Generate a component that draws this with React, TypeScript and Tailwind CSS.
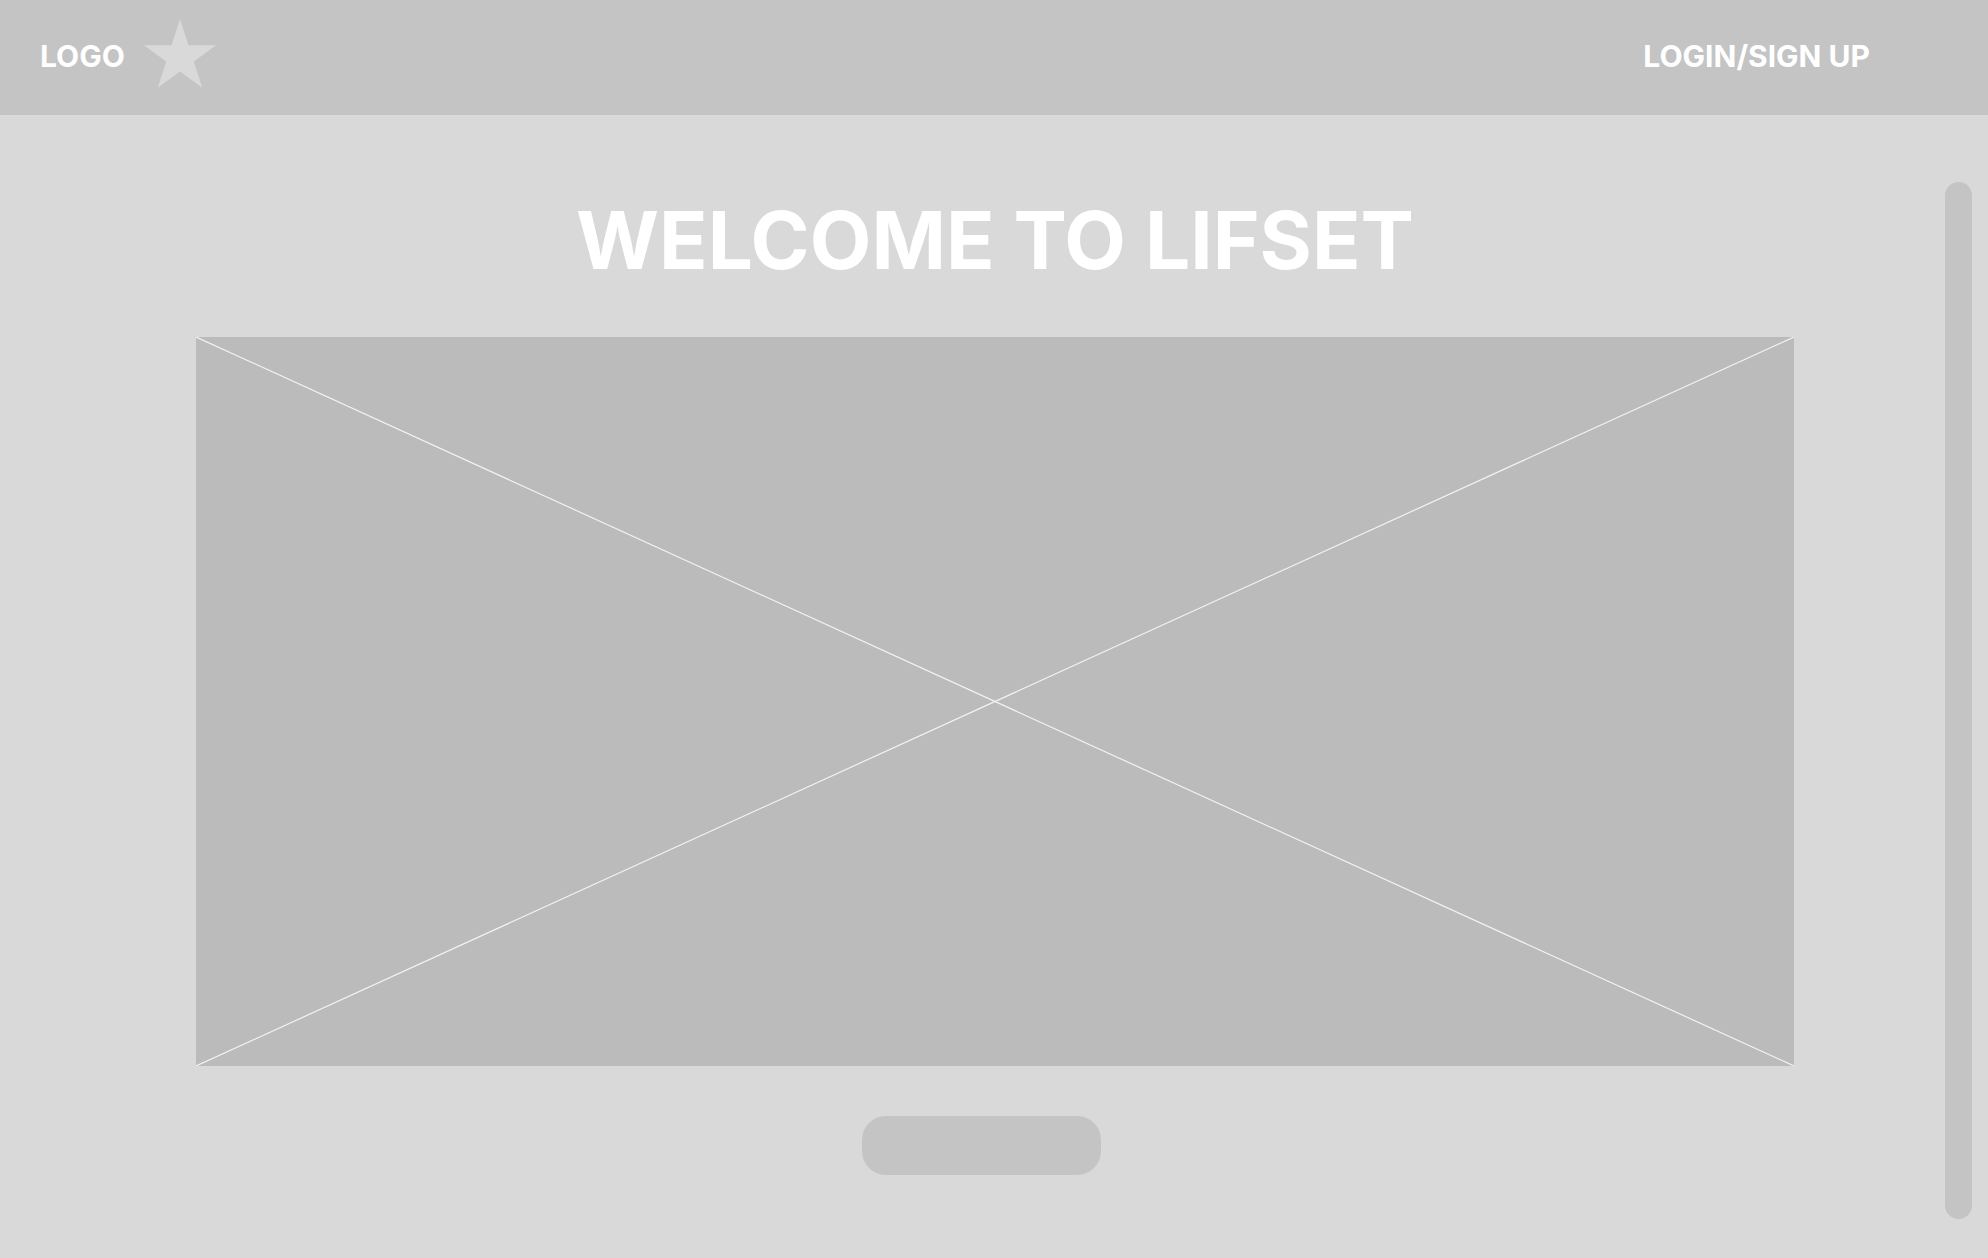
export default function App() {
  return (
    <div
      className="flex h-screen w-full flex-col overflow-hidden bg-[#d9d9d9]"
      style={{ fontFamily: 'Inter, "Noto Sans", sans-serif' }}
    >
      <header className="flex h-[115px] shrink-0 items-start justify-between bg-[#c4c4c4]">
        <div className="flex items-start">
          <div className="pl-[40px] pt-[41px] text-[30px] font-bold leading-none text-white">LOGO</div>
          <svg className="ml-[17px] mt-[19px]" width="76" height="70" viewBox="0 0 76 70">
            <polygon
              fill="#d9d9d9"
              points="38,0 46.5,26.3 74.1,26.3 51.8,42.5 60.3,68.7 38,52.5 15.7,68.7 24.2,42.5 1.9,26.3 29.5,26.3"
            />
          </svg>
        </div>
        <div className="pr-[118px] pt-[41px] text-[30px] font-bold leading-none text-white">LOGIN/SIGN UP</div>
      </header>
      <main className="flex flex-1">
        <div className="flex flex-1 flex-col items-center pl-[45px] pt-[85px]">
          <h1 className="text-[80px] font-bold leading-none text-white">WELCOME TO LIFSET</h1>
          <div className="mt-[57px] h-[729px] w-[1598px] bg-[#bbbbbb]">
            <svg className="h-full w-full" viewBox="0 0 100 100" preserveAspectRatio="none">
              <line x1="0" y1="0" x2="100" y2="100" stroke="#f2f2f2" strokeWidth="1.2" vectorEffect="non-scaling-stroke" />
              <line x1="100" y1="0" x2="0" y2="100" stroke="#f2f2f2" strokeWidth="1.2" vectorEffect="non-scaling-stroke" />
            </svg>
          </div>
          <button className="mr-[27px] mt-[50px] h-[59px] w-[239px] rounded-[24px] bg-[#c4c4c4]" />
        </div>
        <div className="mb-[39px] mr-[16px] mt-[67px] w-[27px] rounded-full bg-[#c4c4c4]" />
      </main>
    </div>
  );
}
